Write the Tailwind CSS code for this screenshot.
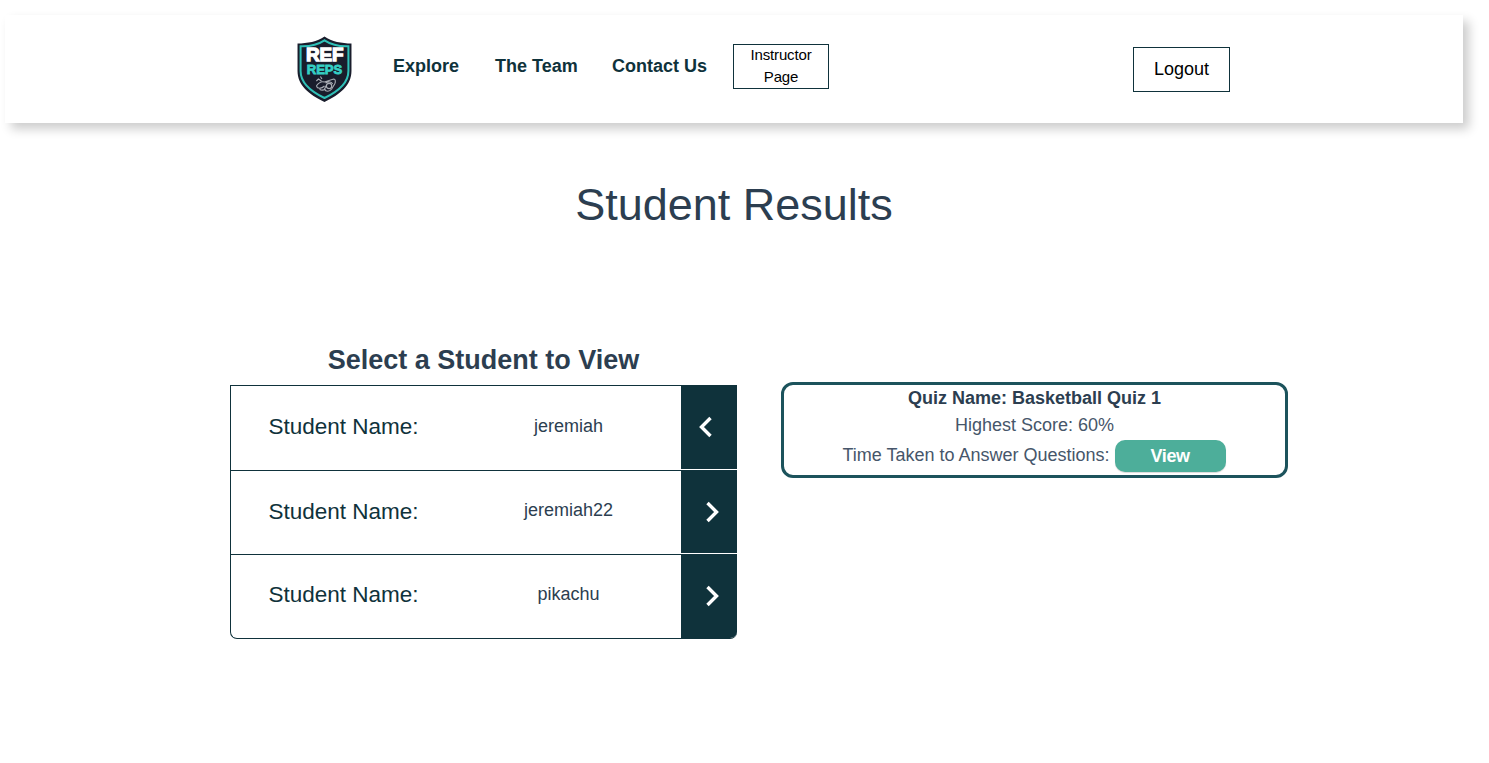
<!DOCTYPE html>
<html lang="en">
<head>
<meta charset="utf-8">
<title>Student Results</title>
<script src="https://cdn.jsdelivr.net/npm/@tailwindcss/browser@4"></script>
</head>
<body class="bg-white font-['Liberation_Sans',Arial,sans-serif] text-[18px] text-[#2c3e50] h-screen overflow-hidden flow-root">
<header class="mt-[15px] ml-[5px] w-[1458px] h-[108px] bg-white flex items-start shadow-[6px_6px_10px_rgba(0,0,0,0.2)]">
  <svg class="ml-[291px] mt-[20px] w-[57px] h-[68px] shrink-0" viewBox="0 0 56 68" preserveAspectRatio="none">
    <path d="M28 1.500C21 6.500 11 8.500 1.500 8.500V36c0 14 11 23.500 26.500 31 15.500-7.500 26.500-17 26.500-31V8.500C45 8.500 35 6.500 28 1.500z" fill="#191d2c"/>
    <path d="M28 5.300C21 10 12 11.500 4.500 11.200V36c0 12.500 10 20.500 23.500 27 13.500-6.500 23.500-14.500 23.500-27V11.200C44 11.500 35 10 28 5.300z" fill="none" stroke="#2fc0b7" stroke-width="2"/>
    <text x="28.300" y="26.500" text-anchor="middle" font-family="Liberation Sans" font-weight="700" font-size="19" textLength="37" lengthAdjust="spacingAndGlyphs" fill="#fff" stroke="#fff" stroke-width="1.300">REF</text>
    <text x="28" y="38.800" text-anchor="middle" font-family="Liberation Sans" font-weight="700" font-size="12.500" textLength="35" lengthAdjust="spacingAndGlyphs" fill="#35cfc4" stroke="#35cfc4" stroke-width=".8">REPS</text>
    <g fill="none" stroke="#a9adb5" stroke-width="1.100">
      <path d="M20 46l2-2 3 2M24 41.500l1.500 2.500M20 51c2-3 5-5 8-4l9-3c2 0 2 3 1 5l-3 5c-2 3-6 3-7 0l2-4M20 51c1 3 5 3 8 0M29 48c3-2 6-1 7 1M24 53c-2 2 2 3 5 1"/>
      <circle cx="32.500" cy="51" r="2.600"/>
    </g>
  </svg>
  <nav class="flex font-bold text-[#0f323b] leading-[22px] mt-[40px] ml-[40px] whitespace-nowrap">
    <a class="w-[102px]">Explore</a>
    <a class="w-[117px]">The Team</a>
    <a class="w-[121px]">Contact Us</a>
  </nav>
  <button class="mt-[29px] w-[96px] h-[45px] border border-[#0f323b] text-black text-[15px] leading-[22px] flex items-start justify-center text-center -tracking-[0.01em]"><span class="-mt-px">Instructor<br>Page</span></button>
  <button class="ml-[304px] mt-[32px] w-[97px] h-[45px] border border-[#0f323b] text-black text-[18px]">Logout</button>
</header>
<h1 class="mt-[56px] w-[1468px] text-center text-[45px] leading-[52px]">Student Results</h1>
<main class="flex items-start mt-[110px] ml-[230px]">
  <section class="w-[507px]">
    <h2 class="text-center font-bold text-[27px] leading-[38px] h-[44px]">Select a Student to View</h2>
    <div class="border-t border-l border-b border-[#0f323b] rounded-b-[7px] overflow-hidden">
      <div class="flex h-[85px] border-b border-[#0f323b]">
        <div class="w-[227px] pl-[37.5px] pt-[27px] text-[22.5px] leading-[28px] text-[#0f323b] whitespace-nowrap">Student Name:</div>
        <div class="w-[223px] pt-[28px] pr-0.5 text-center leading-[24px]">jeremiah</div>
        <div class="w-[56px] bg-[#0f323b] border-b border-white flex items-center pl-[16px] pb-px">
          <svg class="w-[18px] h-[22px]" viewBox="0 0 18 22" fill="none" stroke="#fff" stroke-width="3.400"><path d="M13.500 2L4.500 11l9 9"/></svg>
        </div>
      </div>
      <div class="flex h-[84px] border-b border-[#0f323b]">
        <div class="w-[227px] pl-[37.5px] pt-[27px] text-[22.5px] leading-[28px] text-[#0f323b] whitespace-nowrap">Student Name:</div>
        <div class="w-[223px] pt-[27px] pr-0.5 text-center leading-[24px]">jeremiah22</div>
        <div class="w-[56px] bg-[#0f323b] border-b border-white flex items-center pl-[23px]">
          <svg class="w-[18px] h-[22px]" viewBox="0 0 18 22" fill="none" stroke="#fff" stroke-width="3.400"><path d="M3.500 2l9 9-9 9"/></svg>
        </div>
      </div>
      <div class="flex h-[83px]">
        <div class="w-[227px] pl-[37.5px] pt-[26px] text-[22.5px] leading-[28px] text-[#0f323b] whitespace-nowrap">Student Name:</div>
        <div class="w-[223px] pt-[27px] pr-0.5 text-center leading-[24px]">pikachu</div>
        <div class="w-[56px] bg-[#0f323b] flex items-center pl-[23px] pb-px">
          <svg class="w-[18px] h-[22px]" viewBox="0 0 18 22" fill="none" stroke="#fff" stroke-width="3.400"><path d="M3.500 2l9 9-9 9"/></svg>
        </div>
      </div>
    </div>
  </section>
  <section class="ml-[44px] mt-[41px] w-[507px] h-[96px] border-3 border-[#1c535c] rounded-[12px] text-center">
    <p class="font-bold leading-[26px]">Quiz Name: Basketball Quiz 1</p>
    <p class="leading-[28px] text-[#46566a]">Highest Score: 60%</p>
    <div class="flex justify-center items-start text-[#46566a] pr-px">
      <span class="leading-[32px]">Time Taken to Answer Questions:</span>
      <button class="ml-[5px] mt-px w-[111px] h-[32px] rounded-[10px] bg-[#4dae9a] text-white font-bold text-[18px] tracking-[-0.02em] shadow-[0_1px_1px_rgba(0,0,0,0.15)]">View</button>
    </div>
  </section>
</main>
</body>
</html>
